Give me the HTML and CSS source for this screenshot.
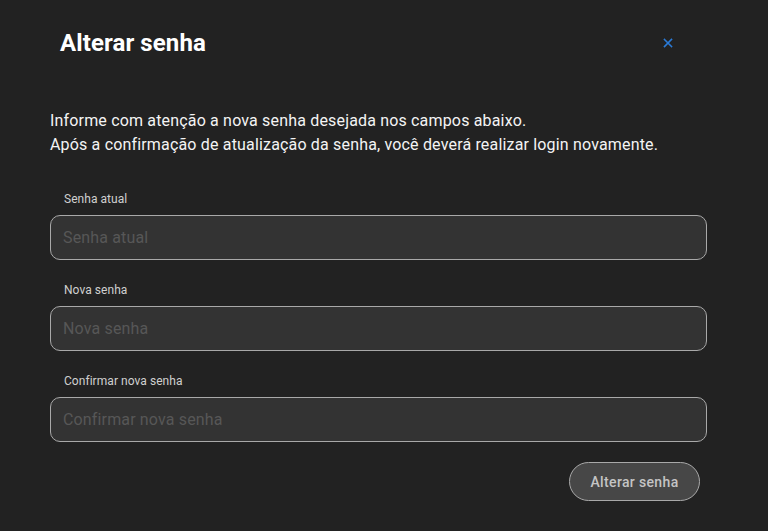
FILE: index.html
```html
<!DOCTYPE html>
<html lang="pt-BR">
<head>
<meta charset="utf-8">
<link rel="stylesheet" href="styles.css">
</head>
<body>
<div class="dialog">
  <header class="head">
    <h1 class="title">Alterar senha</h1>
    <button class="close" aria-label="Fechar">
      <svg width="10" height="10" viewBox="0 0 10 10"><path d="M1.5 1.5L8.5 8.5M8.5 1.5L1.5 8.5" stroke="#2a7ad6" stroke-width="1.6" stroke-linecap="square"/></svg>
    </button>
  </header>
  <p class="intro">Informe com atenção a nova senha desejada nos campos abaixo.<br>Após a confirmação de atualização da senha, você deverá realizar login novamente.</p>
  <form class="form">
    <label class="field">
      <span class="label">Senha atual</span>
      <input class="input" type="password" placeholder="Senha atual">
    </label>
    <label class="field">
      <span class="label">Nova senha</span>
      <input class="input" type="password" placeholder="Nova senha">
    </label>
    <label class="field">
      <span class="label">Confirmar nova senha</span>
      <input class="input" type="password" placeholder="Confirmar nova senha">
    </label>
    <div class="actions">
      <button class="submit" type="button">Alterar senha</button>
    </div>
  </form>
</div>
</body>
</html>
```

FILE: styles.css
```css
html, body {
  margin: 0;
  padding: 0;
  background: #222222;
  height: 100%;
}
body {
  font-family: Roboto, "Liberation Sans", sans-serif;
  color: #ffffff;
}
.dialog {
  padding: 0 61px 0 50px;
}
.head {
  display: flex;
  align-items: center;
  justify-content: space-between;
  height: 86px;
  padding: 0 34px 0 10px;
}
.title {
  margin: 0;
  font-size: 24px;
  font-weight: 700;
  color: #ffffff;
  letter-spacing: 0.1px;
}
.close {
  background: none;
  border: none;
  padding: 0;
  width: 10px;
  height: 10px;
  display: flex;
  cursor: pointer;
}
.intro {
  margin: 23px 0 0 0;
  font-size: 16px;
  line-height: 24px;
  letter-spacing: 0.17px;
  color: #f4f4f4;
}
.form {
  margin-top: 34px;
  display: flex;
  flex-direction: column;
  gap: 22px;
}
.field {
  display: flex;
  flex-direction: column;
  gap: 8px;
}
.label {
  font-size: 12px;
  line-height: 16px;
  color: #d0d0d0;
  padding-left: 14px;
  letter-spacing: 0.05px;
}
.input {
  box-sizing: border-box;
  height: 45px;
  width: 100%;
  background: #333333;
  border: 1px solid #a9a9a9;
  border-radius: 10px;
  padding: 0 12px;
  font-family: Roboto, "Liberation Sans", sans-serif;
  font-size: 16px;
  letter-spacing: 0.15px;
  color: #ffffff;
  outline: none;
}
.input::placeholder {
  color: #575757;
}
.actions {
  display: flex;
  justify-content: flex-end;
  padding-right: 7px;
  margin-top: -2px;
}
.submit {
  box-sizing: border-box;
  height: 39px;
  width: 131px;
  border-radius: 20px;
  background: #474747;
  border: 1px solid #a9a9a9;
  color: #c4c4c4;
  font-family: Roboto, "Liberation Sans", sans-serif;
  font-size: 14px;
  font-weight: 500;
  letter-spacing: 0.35px;
  cursor: pointer;
}
```
